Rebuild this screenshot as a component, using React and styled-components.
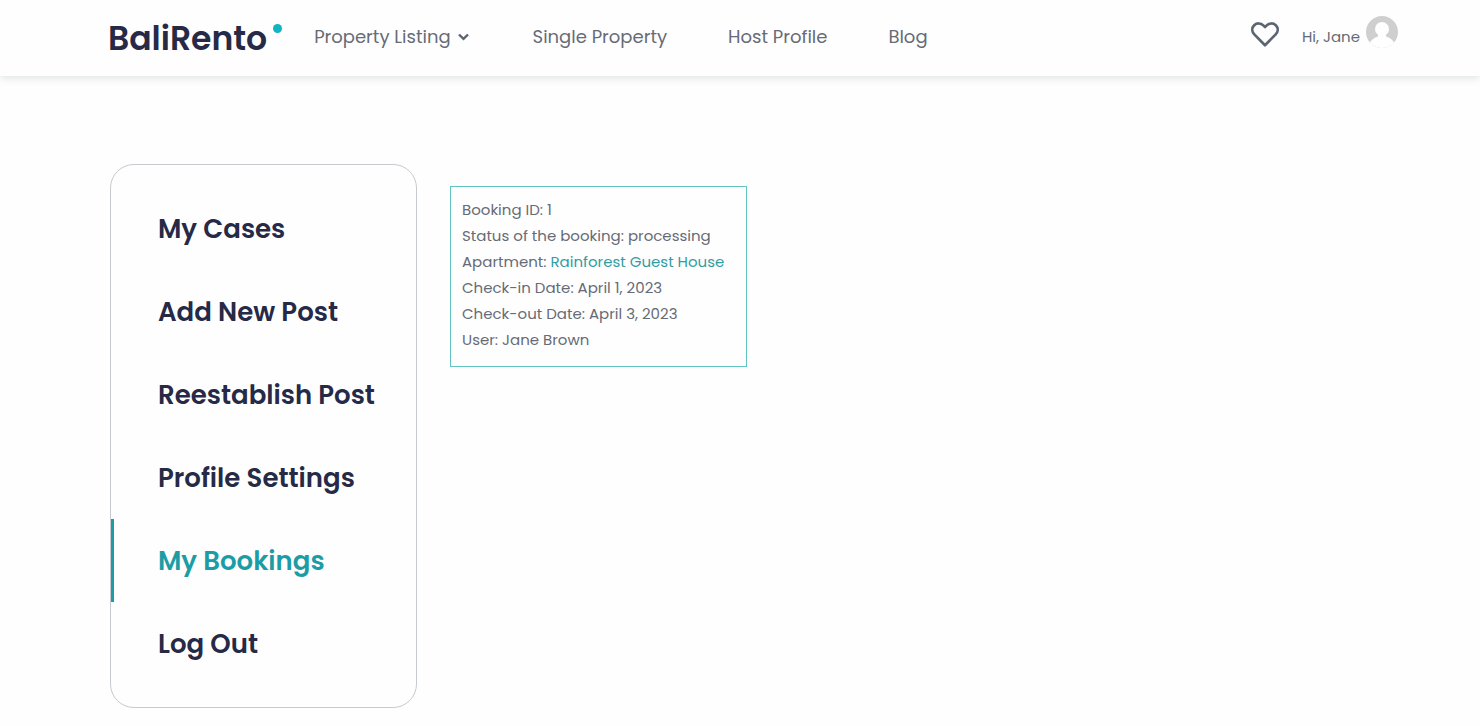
import React from 'react';
import styled, { createGlobalStyle } from 'styled-components';

const navLinks = [
    { label: 'Property Listing', dropdown: true },
    { label: 'Single Property' },
    { label: 'Host Profile' },
    { label: 'Blog' },
];

const menuItems = [
    { label: 'My Cases' },
    { label: 'Add New Post' },
    { label: 'Reestablish Post' },
    { label: 'Profile Settings' },
    { label: 'My Bookings', active: true },
    { label: 'Log Out' },
];

const App = () => {
    return (
        <>
            <GlobalStyle />
            <Header>
                <Logo href="#">
                    BaliRento
                    <LogoDot />
                </Logo>
                <Nav>
                    {navLinks.map((link) => (
                        <NavLink href="#" key={link.label}>
                            {link.label}
                            {link.dropdown && <Chevron />}
                        </NavLink>
                    ))}
                </Nav>
                <UserArea>
                    <HeartButton type="button" aria-label="Favourites">
                        <Heart />
                    </HeartButton>
                    <Profile href="#">
                        Hi, Jane
                        <Avatar />
                    </Profile>
                </UserArea>
            </Header>
            <Main>
                <Sidebar>
                    {menuItems.map((item) => (
                        <MenuLink href="#" key={item.label} $active={item.active}>
                            {item.label}
                        </MenuLink>
                    ))}
                </Sidebar>
                <Booking>
                    <p>Booking ID: 1</p>
                    <p>Status of the booking: processing</p>
                    <p>Apartment: <a href="#">Rainforest Guest House</a></p>
                    <p>Check-in Date: April 1, 2023</p>
                    <p>Check-out Date: April 3, 2023</p>
                    <p>User: Jane Brown</p>
                </Booking>
            </Main>
        </>
    );
};

//Icons
const Chevron = () => (
    <svg width="14" height="8" viewBox="0 0 14 8" fill="none">
        <path d="M1 1.5 5.5 5.900 10 1.5" stroke="#5c6470" strokeWidth="2.4" />
    </svg>
);

const Heart = () => (
    <svg width="28" height="28" viewBox="0 0 28 28" fill="none">
        <path
            d="M14 26.200 3.300 15.400C.7 12.700.7 8.800 3.200 6.300 5.800 3.800 9.800 3.900 12.300 6.400L14 8.100l1.700-1.700c2.500-2.500 6.500-2.600 9.100-.1 2.500 2.500 2.500 6.400-.1 9.100Z"
            stroke="#5c6572"
            strokeWidth="2.7"
            strokeLinejoin="round"
        />
    </svg>
);

const Avatar = () => (
    <svg width="32" height="34" viewBox="0 0 32 34">
        <defs>
            <clipPath id="avatar">
                <circle cx="16" cy="16" r="16" />
            </clipPath>
        </defs>
        <g clipPath="url(#avatar)">
            <rect width="32" height="32" fill="#cfcfcf" />
            <circle cx="16" cy="13" r="7" fill="#fefefe" />
            <path d="M12 17h8v3.500c4.500 1.200 7.500 4 9 8V33H3v-4.500c1.500-4 4.500-6.800 9-8Z" fill="#fefefe" />
        </g>
    </svg>
);

//Styles
const GlobalStyle = createGlobalStyle`
    *{
        margin: 0;
        padding: 0;
        box-sizing: border-box;
    }
    body{
        background: #fefefe;
        color: #666b76;
        font-family: "Poppins", "Inter", sans-serif;
        font-size: 15px;
        line-height: 26px;
    }
    a{
        color: inherit;
        text-decoration: none;
    }
`;

const Header = styled.header`
    display: flex;
    align-items: center;
    height: 76px;
    padding: 0 82px 0 108px;
    background: #fefefe;
    box-shadow: 0 2px 8px rgba(60, 80, 90, 0.16);
`;

const Logo = styled.a`
    display: flex;
    padding-top: 2px;
    color: #262a46;
    font-size: 33px;
    font-weight: 600;
    line-height: 44px;
`;

const LogoDot = styled.span`
    width: 9px;
    height: 9px;
    margin: 7px 0 0 6px;
    border-radius: 50%;
    background: #0fb5c0;
`;

const Nav = styled.nav`
    display: flex;
    gap: 61px;
    margin-left: 32px;
    padding-bottom: 2px;
`;

const NavLink = styled.a`
    display: flex;
    align-items: center;
    gap: 7px;
    font-size: 18px;
    white-space: nowrap;
`;

const UserArea = styled.div`
    display: flex;
    align-items: center;
    gap: 23px;
    margin-left: auto;
    padding-bottom: 10px;
`;

const HeartButton = styled.button`
    display: flex;
    border: none;
    background: none;
    cursor: pointer;
`;

const Profile = styled.a`
    display: flex;
    align-items: flex-end;
    gap: 6px;
    white-space: nowrap;
`;

const Main = styled.main`
    display: flex;
    align-items: flex-start;
    gap: 33px;
    padding: 88px 110px 18px;
`;

const Sidebar = styled.nav`
    display: flex;
    flex-direction: column;
    flex: none;
    width: 307px;
    padding: 22px 0;
    border: 1px solid #c6cace;
    border-radius: 24px;
`;

const MenuLink = styled.a`
    padding: 25px 0 23px 44px;
    border-left: 3px solid ${({ $active }) => ($active ? '#1c9da5' : 'transparent')};
    color: ${({ $active }) => ($active ? '#1c9da5' : '#262a46')};
    font-size: 26px;
    font-weight: 600;
    line-height: 35px;
    white-space: nowrap;
`;

const Booking = styled.section`
    width: 297px;
    margin-top: 22px;
    padding: 10px 11px 13px;
    border: 1px solid #62c3c1;
    white-space: nowrap;
    a{
        color: #2f9da3;
    }
`;

export default App;
